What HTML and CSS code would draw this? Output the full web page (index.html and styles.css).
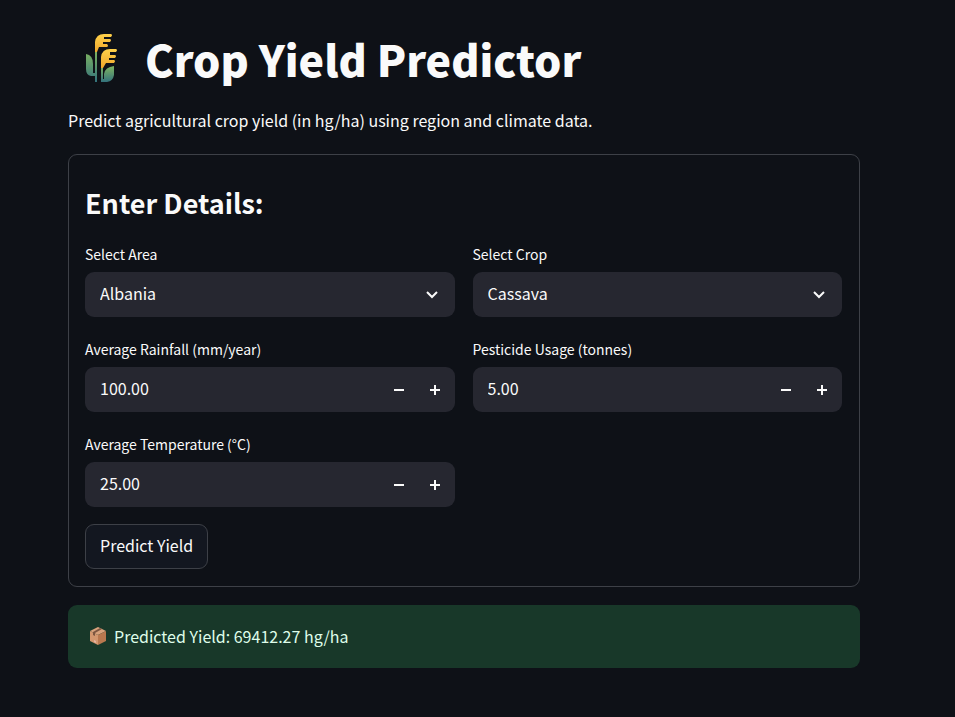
FILE: index.html
```html
<!DOCTYPE html>
<html lang="en">
<head>
<meta charset="utf-8">
<title>Crop Yield Predictor</title>
<link rel="stylesheet" href="styles.css">
</head>
<body>
<main class="page">
  <h1 class="title">
    <svg class="title-icon" viewBox="0 0 34 50" aria-hidden="true">
      <defs>
        <linearGradient id="ear" x1="0" y1="0" x2="0" y2="1"><stop offset="0" stop-color="#ffd24a"/><stop offset="1" stop-color="#efa62c"/></linearGradient>
        <linearGradient id="leaf" x1="0" y1="0" x2="0" y2="1"><stop offset="0" stop-color="#7fb560"/><stop offset="1" stop-color="#33727c"/></linearGradient>
      </defs>
      <path fill="url(#leaf)" d="M1 21Q8 22 8 31V40H10V18H12V49H10V43H6Q1 42 1 36Z"/>
      <path fill="url(#leaf)" d="M16 34H18V46H19V41Q20 34 29 33V42Q28 48 22 49H16Z"/>
      <path fill="url(#ear)" d="M10 19V9Q11 1 19 1H26Q28 2 26 4H19V6H25Q27 7 25 9H18V11H22Q24 13 22 14H14L12 19Z"/>
      <path fill="url(#ear)" d="M16 35V24Q17 16 25 16H31Q33 17 31 19H25V22H30Q32 23 30 25H24V27H29Q31 28 29 30H21L18 35Z"/>
    </svg>
    <span>Crop Yield Predictor</span>
  </h1>
  <p class="intro">Predict agricultural crop yield (in hg/ha) using region and climate data.</p>

  <form class="card">
    <h2 class="heading">Enter Details:</h2>
    <div class="fields">
      <div class="field">
        <label for="area">Select Area</label>
        <div class="control">
          <select id="area"><option>Albania</option></select>
          <svg class="chevron" viewBox="0 0 12 8" aria-hidden="true"><path d="M1 1L6 6L11 1"/></svg>
        </div>
      </div>
      <div class="field">
        <label for="crop">Select Crop</label>
        <div class="control">
          <select id="crop"><option>Cassava</option></select>
          <svg class="chevron" viewBox="0 0 12 8" aria-hidden="true"><path d="M1 1L6 6L11 1"/></svg>
        </div>
      </div>
      <div class="field">
        <label for="rain">Average Rainfall (mm/year)</label>
        <div class="control">
          <input id="rain" type="text" inputmode="decimal" value="100.00">
          <button class="step" type="button" aria-label="Decrease rainfall"><svg viewBox="0 0 10 10"><path d="M0 5H10"/></svg></button>
          <button class="step" type="button" aria-label="Increase rainfall"><svg viewBox="0 0 10 10"><path d="M0 5H10M5 0V10"/></svg></button>
        </div>
      </div>
      <div class="field">
        <label for="pesticide">Pesticide Usage (tonnes)</label>
        <div class="control">
          <input id="pesticide" type="text" inputmode="decimal" value="5.00">
          <button class="step" type="button" aria-label="Decrease pesticide usage"><svg viewBox="0 0 10 10"><path d="M0 5H10"/></svg></button>
          <button class="step" type="button" aria-label="Increase pesticide usage"><svg viewBox="0 0 10 10"><path d="M0 5H10M5 0V10"/></svg></button>
        </div>
      </div>
      <div class="field">
        <label for="temp">Average Temperature (°C)</label>
        <div class="control">
          <input id="temp" type="text" inputmode="decimal" value="25.00">
          <button class="step" type="button" aria-label="Decrease temperature"><svg viewBox="0 0 10 10"><path d="M0 5H10"/></svg></button>
          <button class="step" type="button" aria-label="Increase temperature"><svg viewBox="0 0 10 10"><path d="M0 5H10M5 0V10"/></svg></button>
        </div>
      </div>
    </div>
    <button class="submit" type="submit">Predict Yield</button>
  </form>

  <div class="result" role="status">
    <svg class="box-icon" viewBox="0 0 18 20" aria-hidden="true">
      <path fill="#d9a27c" d="M9 1L17 5L9 9L1 5Z"/>
      <path fill="#d3976f" d="M1 5L9 9V19L1 15Z"/>
      <path fill="#b9784f" d="M17 5L9 9V19L17 15Z"/>
      <path fill="#7d5640" d="M11 2L13 3L6 7V10L4 9V6Z"/>
      <path fill="#e6b5a5" d="M5 14L7 15V17L5 16Z"/>
    </svg>
    <span>Predicted Yield: 69412.27 hg/ha</span>
  </div>
</main>
</body>
</html>
```

FILE: styles.css
```css
* { box-sizing: border-box; }

body {
  margin: 0;
  background: #0e1117;
  color: #fafafa;
  font-family: "Source Sans Pro", "Noto Sans CJK SC", sans-serif;
  font-size: 16px;
  line-height: 28px;
}

.page { padding: 28px 95px 48px 68px; }

.title {
  display: flex;
  align-items: center;
  gap: 26px;
  margin: 0;
  padding-left: 17px;
  font-size: 43px;
  font-weight: 900;
  line-height: 60px;
}

.title-icon { width: 34px; height: 50px; }

.intro { margin: 18px 0 20px; }

.card {
  border: 1px solid #3d4047;
  border-radius: 9px;
  padding: 16px 17px 17px 16px;
}

.heading {
  margin: 12px 0 22px;
  font-size: 27px;
  font-weight: 700;
  line-height: 40px;
}

.fields {
  display: grid;
  grid-template-columns: 1fr 1fr;
  gap: 23px 18px;
}

.field label {
  display: block;
  margin-bottom: 9px;
  font-size: 14px;
  line-height: 18px;
}

.control {
  position: relative;
  display: flex;
  align-items: center;
  height: 45px;
  padding-right: 2px;
  border-radius: 9px;
  background: #262730;
}

.control select,
.control input {
  flex: 1;
  min-width: 0;
  height: 45px;
  border: 0;
  padding: 0 15px 3px;
  appearance: none;
  background: transparent;
  color: inherit;
  font: inherit;
}

.chevron {
  position: absolute;
  right: 17px;
  width: 12px;
  height: 8px;
  pointer-events: none;
}

.chevron path,
.step path {
  fill: none;
  stroke: #fafafa;
  stroke-width: 2;
}

.step {
  display: flex;
  align-items: center;
  justify-content: center;
  width: 36px;
  height: 45px;
  border: 0;
  padding: 0;
  background: transparent;
}

.step svg { width: 10px; height: 10px; }

.submit {
  display: block;
  height: 45px;
  margin-top: 17px;
  border: 1px solid #3d4047;
  border-radius: 9px;
  padding: 0 14px 3px;
  background: #131720;
  color: inherit;
  font: inherit;
}

.result {
  display: flex;
  align-items: center;
  gap: 7px;
  margin-top: 18px;
  border-radius: 9px;
  padding: 17px 21px 18px;
  background: #183829;
  color: #dffde9;
}

.box-icon { width: 18px; height: 20px; }
```
